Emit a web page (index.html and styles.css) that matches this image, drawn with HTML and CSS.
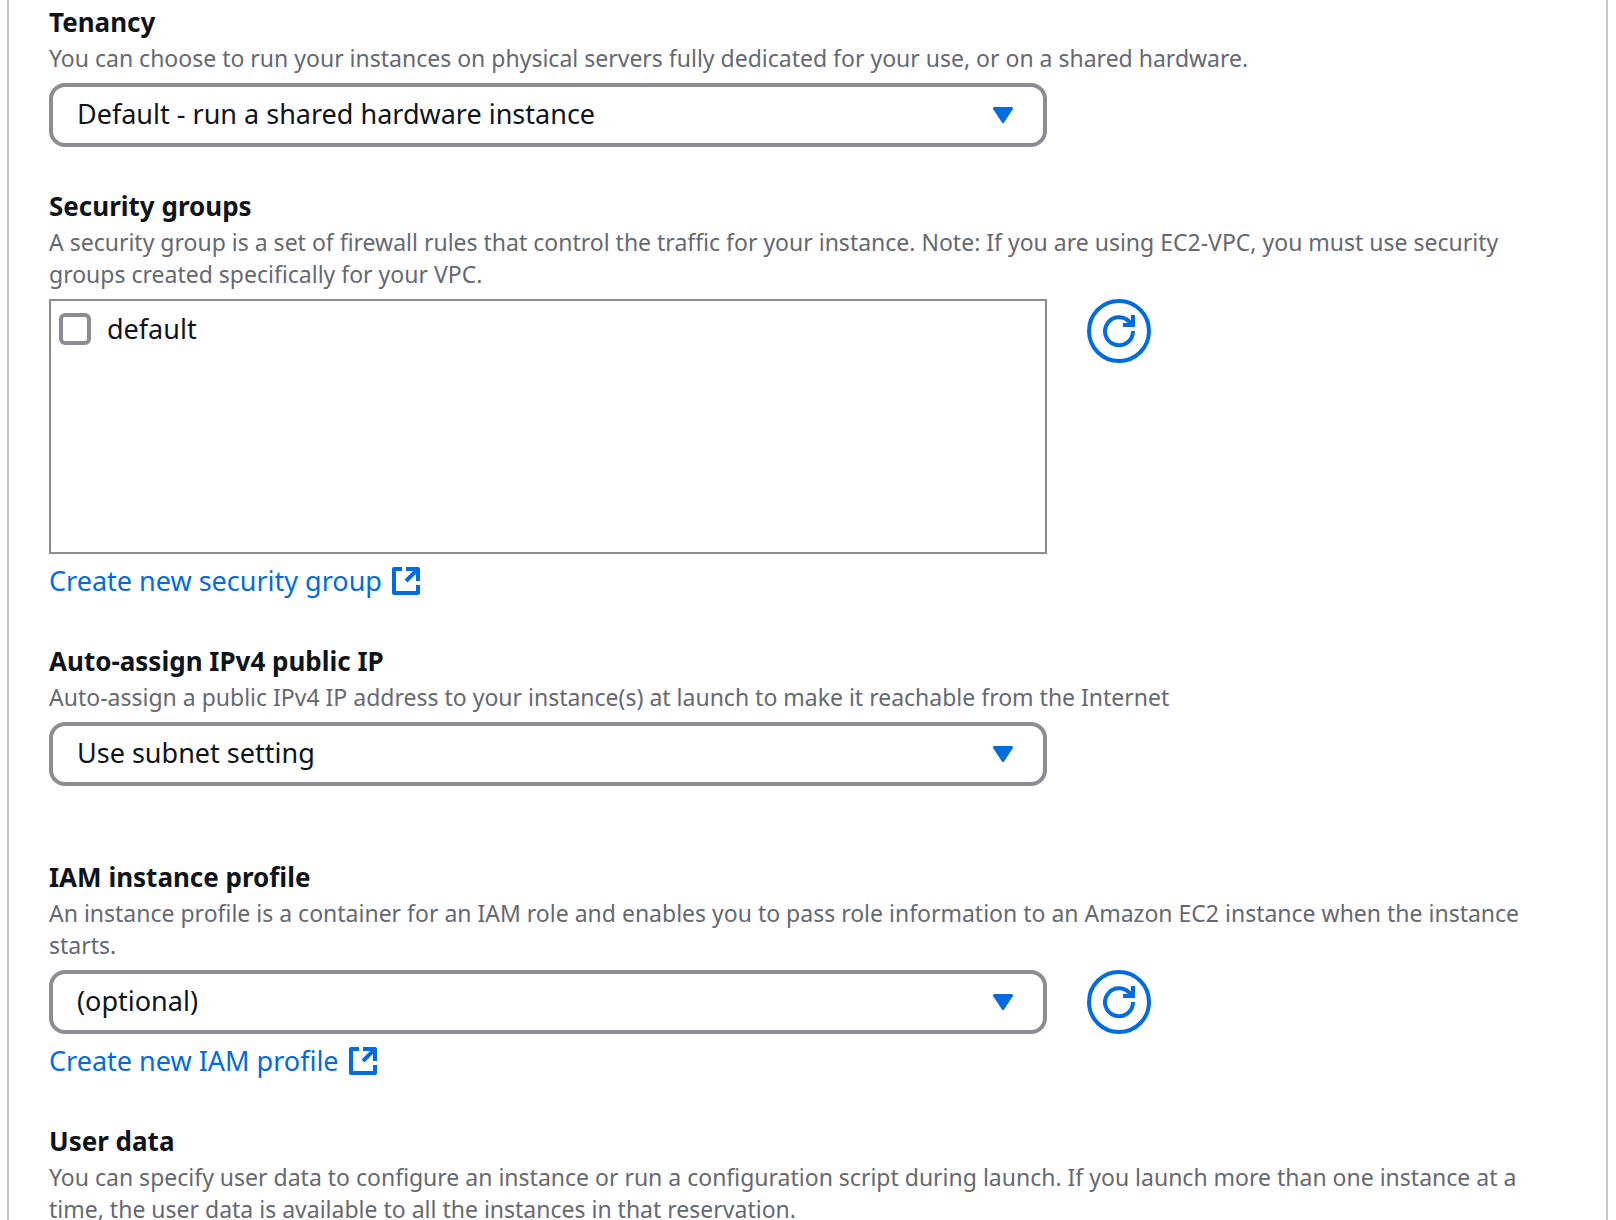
FILE: index.html
```html
<!DOCTYPE html>
<html lang="en">
<head>
<meta charset="utf-8">
<meta name="viewport" content="width=device-width, initial-scale=1">
<title>Launch configuration</title>
<link rel="stylesheet" href="styles.css">
</head>
<body>
<svg class="sprite" aria-hidden="true">
  <symbol id="caret" viewBox="0 0 20 16">
    <path d="M1.5 1.5H18.5L10 14.5Z" fill="currentColor" stroke="currentColor" stroke-width="3" stroke-linejoin="round"/>
  </symbol>
  <symbol id="refresh" viewBox="0 0 32 32">
    <path d="M30 16A14 14 0 1 1 28 9M30 0V10H20" fill="none" stroke="currentColor" stroke-width="4"/>
  </symbol>
  <symbol id="external" viewBox="0 0 28 28">
    <path d="M10 2H2V26H26V18M14 2H26V14M26 2L14 14" fill="none" stroke="currentColor" stroke-width="4" stroke-linejoin="round"/>
  </symbol>
</svg>
<main class="panel">
  <form class="form">
    <div class="field">
      <label class="label" for="tenancy">Tenancy</label>
      <p class="description">You can choose to run your instances on physical servers fully dedicated for your use, or on a shared hardware.</p>
      <div class="control">
        <div class="select">
          <select id="tenancy" class="select-input"><option>Default - run a shared hardware instance</option></select>
          <svg class="caret"><use href="#caret"/></svg>
        </div>
      </div>
    </div>

    <fieldset class="field">
      <legend class="label">Security groups</legend>
      <p class="description">A security group is a set of firewall rules that control the traffic for your instance. Note: If you are using EC2-VPC, you must use security groups created specifically for your VPC.</p>
      <div class="control">
        <div class="list">
          <label class="option"><input class="checkbox" type="checkbox">default</label>
        </div>
        <button class="refresh" type="button" aria-label="Refresh security groups"><svg class="refresh-icon"><use href="#refresh"/></svg></button>
      </div>
      <a class="link" href="#">Create new security group<svg class="external"><use href="#external"/></svg></a>
    </fieldset>

    <div class="field field-spaced">
      <label class="label" for="public-ip">Auto-assign IPv4 public IP</label>
      <p class="description">Auto-assign a public IPv4 IP address to your instance(s) at launch to make it reachable from the Internet</p>
      <div class="control">
        <div class="select">
          <select id="public-ip" class="select-input"><option>Use subnet setting</option></select>
          <svg class="caret"><use href="#caret"/></svg>
        </div>
      </div>
    </div>

    <div class="field">
      <label class="label" for="iam-profile">IAM instance profile</label>
      <p class="description">An instance profile is a container for an IAM role and enables you to pass role information to an Amazon EC2 instance when the instance starts.</p>
      <div class="control">
        <div class="select">
          <select id="iam-profile" class="select-input"><option>(optional)</option></select>
          <svg class="caret"><use href="#caret"/></svg>
        </div>
        <button class="refresh" type="button" aria-label="Refresh instance profiles"><svg class="refresh-icon"><use href="#refresh"/></svg></button>
      </div>
      <a class="link" href="#">Create new IAM profile<svg class="external"><use href="#external"/></svg></a>
    </div>

    <section class="field">
      <h2 class="label">User data</h2>
      <p class="description">You can specify user data to configure an instance or run a configuration script during launch. If you launch more than one instance at a time, the user data is available to all the instances in that reservation.</p>
    </section>
  </form>
</main>
</body>
</html>
```
FILE: styles.css
```css
* {
  box-sizing: border-box;
}

body {
  margin: 0;
  background: #fff;
  color: #0f141a;
  font-family: "Noto Sans", "Open Sans", sans-serif;
  font-size: 27px;
  line-height: 40px;
}

.sprite {
  display: none;
}

.panel {
  margin: 0 8px 0 7px;
  padding: 2px 40px 0;
  border: solid #c6c6cd;
  border-width: 0 2px;
}

.form {
  display: flex;
  flex-direction: column;
  gap: 39px;
}

.field {
  min-width: 0;
  margin: 0;
  padding: 0;
  border: 0;
}

.field-spaced {
  margin-bottom: 32px;
}

.label {
  display: block;
  margin: 0;
  padding: 0;
  font-size: 26px;
  font-weight: 700;
  line-height: 40px;
}

.description {
  margin: 0 0 9px;
  color: #656871;
  font-size: 23px;
  line-height: 32px;
}

/* Controls fill two thirds of the row, measured with the gap included. */
.control {
  display: grid;
  grid-template-columns: calc((100% + 40px) * 2 / 3 - 40px) 1fr;
  column-gap: 40px;
  align-items: start;
}

.select {
  display: grid;
  align-items: center;
}

.select-input {
  grid-area: 1 / 1;
  width: 100%;
  height: 64px;
  padding: 0 72px 2px 24px;
  border: 4px solid #8c8c94;
  border-radius: 16px;
  background: #fff;
  color: inherit;
  font: inherit;
  appearance: none;
}

.caret {
  grid-area: 1 / 1;
  justify-self: end;
  width: 20px;
  height: 16px;
  margin-right: 34px;
  color: #006ce0;
  pointer-events: none;
}

.list {
  height: 255px;
  padding: 8px;
  border: 2px solid #8c8c94;
  overflow: auto;
}

.option {
  display: flex;
  align-items: center;
  gap: 16px;
}

.checkbox {
  width: 32px;
  height: 32px;
  margin: 0;
  border: 4px solid #8c8c94;
  border-radius: 6px;
  background: #fff;
  appearance: none;
}

.checkbox:checked {
  border-color: #006ce0;
  background: #006ce0;
}

.refresh {
  display: flex;
  align-items: center;
  justify-content: center;
  width: 64px;
  height: 64px;
  padding: 0;
  border: 4px solid #006ce0;
  border-radius: 50%;
  background: #fff;
  color: #006ce0;
}

.refresh-icon {
  width: 32px;
  height: 32px;
}

.link {
  display: flex;
  align-items: center;
  gap: 10px;
  width: fit-content;
  margin: 7px 0 1px;
  color: #006ce0;
  text-decoration: none;
}

.external {
  width: 28px;
  height: 28px;
}
```
